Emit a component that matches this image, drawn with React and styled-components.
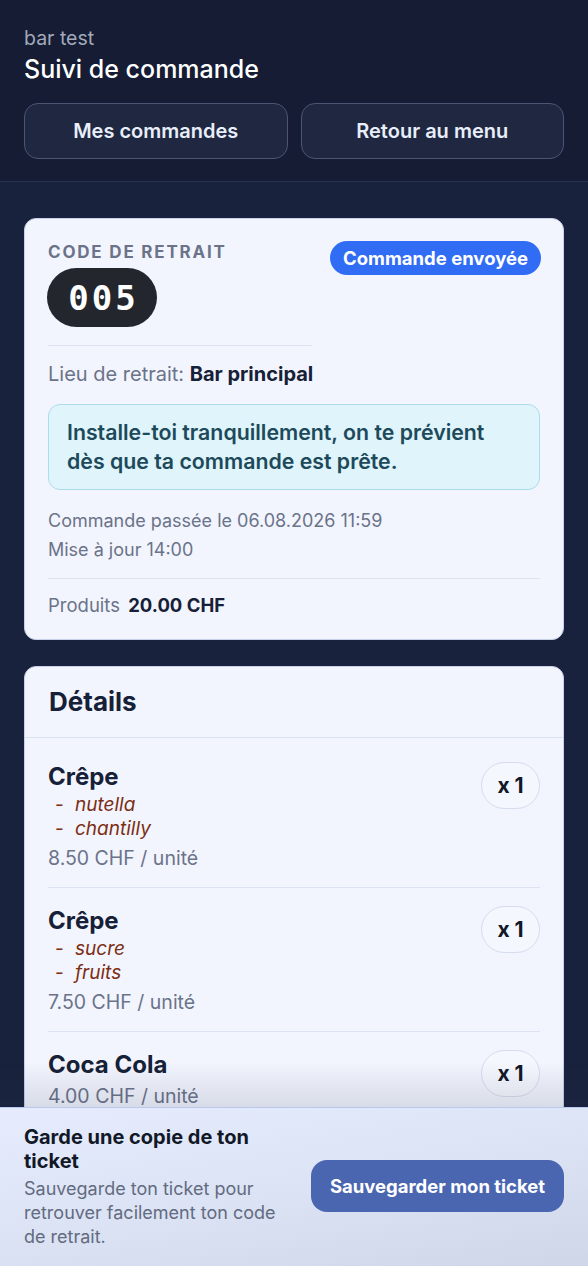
import React from 'react'
import styled, { createGlobalStyle } from 'styled-components'

const GlobalStyle = createGlobalStyle`
  * { box-sizing: border-box; }
  body {
    margin: 0;
    background: #19223c;
    font-family: Inter, "Noto Sans", sans-serif;
    -webkit-font-smoothing: antialiased;
  }
`

const Page = styled.div`
  min-height: 100vh;
  background: #19223c;
`

// top header
const Header = styled.header`
  background: #151c33;
  border-bottom: 1px solid #2a3450;
  padding: 26px 24px 22px;
`
const Venue = styled.div`
  font-size: 19.5px;
  line-height: 24px;
  color: #a2aabb;
`
const Title = styled.h1`
  margin: 4px 0 0;
  font-size: 25px;
  line-height: 30px;
  font-weight: 500;
  color: #ffffff;
`
const NavRow = styled.div`
  display: grid;
  grid-template-columns: 1fr 1fr;
  gap: 13px;
  margin-top: 19px;
`
const NavButton = styled.button`
  height: 56px;
  border-radius: 14px;
  border: 1px solid #4b5672;
  background: #1f2741;
  color: #e8eefa;
  font-family: inherit;
  font-size: 20px;
  font-weight: 600;
`

const Main = styled.main`
  padding: 36px 24px 180px;
  display: flex;
  flex-direction: column;
  gap: 26px;
`
const Card = styled.section`
  background: #f2f5fe;
  border: 1px solid #c7d0e8;
  border-radius: 12px;
  padding: ${p => (p.$flush ? '0' : '23px 23px 22px')};
`

// pickup card
const TopRow = styled.div`
  display: flex;
  justify-content: space-between;
  align-items: flex-start;
`
const CodeBlock = styled.div`
  width: 264px;
  padding-bottom: 18px;
  border-bottom: 1px solid #dde3f1;
`
const Label = styled.div`
  font-size: 17px;
  line-height: 20px;
  font-weight: 700;
  letter-spacing: 1.8px;
  text-transform: uppercase;
  color: #6b7389;
`
const CodePill = styled.div`
  display: flex;
  align-items: center;
  justify-content: center;
  margin-top: 6px;
  margin-left: -1px;
  height: 59px;
  width: 110px;
  border-radius: 30px;
  background: #23262c;
  color: #ffffff;
  font-family: "DejaVu Sans Mono", "Liberation Mono", monospace;
  font-size: 34px;
  font-weight: 700;
  letter-spacing: 3px;
  padding-left: 3px;
`
const StatusBadge = styled.span`
  display: inline-flex;
  align-items: center;
  height: 34px;
  padding: 0 13px;
  border-radius: 17px;
  background: #316cf4;
  color: #ffffff;
  font-size: 18.5px;
  font-weight: 700;
  margin: -1px -1px 0 0;
  white-space: nowrap;
`
const InfoLine = styled.div`
  margin-top: 16px;
  font-size: 20px;
  line-height: 24px;
  color: #6b7389;
  b { color: #162036; font-weight: 700; }
`
const Notice = styled.div`
  margin-top: 18px;
  padding: 13px 22px 13px 18px;
  background: #dff4fb;
  border: 1px solid #a9dcec;
  border-radius: 12px;
  font-size: 21.3px;
  line-height: 29px;
  font-weight: 600;
  color: #1d4a5a;
`
const Meta = styled.div`
  margin-top: 16px;
  font-size: 18px;
  line-height: 29px;
  color: #6b7389;
  padding-bottom: 14px;
  border-bottom: 1px solid #dde3f1;
`
const Total = styled.div`
  margin-top: 14px;
  font-size: 18.5px;
  line-height: 24px;
  color: #6b7389;
  b { color: #162036; font-weight: 700; margin-left: 3px; }
`

// details card
const DetailsHead = styled.h2`
  margin: 0;
  padding: 20px 24px;
  font-size: 26px;
  line-height: 30px;
  font-weight: 700;
  color: #162036;
  border-bottom: 1px solid #d8e0f1;
`
const ItemList = styled.div`
  padding: 6px 23px;
`
const Item = styled.div`
  display: flex;
  justify-content: space-between;
  align-items: flex-start;
  padding: 19px 0 17px;
  border-bottom: 1px solid #dbe2f2;
  &:last-child { border-bottom: none; }
`
const ItemName = styled.div`
  font-size: 24px;
  line-height: 27px;
  font-weight: 700;
  color: #162036;
`
const Options = styled.ul`
  list-style: none;
  margin: 3px 0 0;
  padding: 0 0 0 7px;
`
const Option = styled.li`
  font-size: 19px;
  line-height: 24px;
  font-style: italic;
  color: #7c2d12;
  &::before {
    content: '-';
    font-style: normal;
    display: inline-block;
    width: 20px;
  }
`
const UnitPrice = styled.div`
  margin-top: ${p => (p.$alone ? '6px' : '5px')};
  font-size: 19.5px;
  line-height: 24px;
  color: #6b7389;
`
const Qty = styled.div`
  flex-shrink: 0;
  display: flex;
  align-items: center;
  justify-content: center;
  width: 59px;
  height: 47px;
  margin-top: -1px;
  border-radius: 24px;
  border: 1px solid #d4dcef;
  background: #f5f7fe;
  font-size: 21px;
  font-weight: 700;
  color: #111827;
`

// sticky save bar
const SaveBar = styled.div`
  position: fixed;
  left: 0;
  right: 0;
  bottom: 0;
  height: 159px;
  display: flex;
  align-items: center;
  gap: 24px;
  padding: 0 24px;
  border-top: 1px solid #b9c8ee;
  background: linear-gradient(170deg, #e6ecfd 0%, #dbe3f5 50%, #ced6e8 100%);
  &::before {
    content: '';
    position: absolute;
    left: 0;
    right: 0;
    top: -46px;
    height: 45px;
    background: linear-gradient(to bottom, rgba(40, 50, 80, 0), rgba(40, 50, 80, 0.13));
    pointer-events: none;
  }
`
const SaveText = styled.div`
  flex: 1;
  min-width: 0;
`
const SaveTitle = styled.div`
  font-size: 20px;
  line-height: 24px;
  font-weight: 700;
  color: #111827;
`
const SaveHint = styled.div`
  margin-top: 4px;
  font-size: 18px;
  line-height: 24px;
  color: #636b7f;
`
const SaveButton = styled.button`
  flex-shrink: 0;
  width: 253px;
  height: 52px;
  border: none;
  border-radius: 16px;
  background: #4a66b0;
  color: #ffffff;
  font-family: inherit;
  font-size: 18.5px;
  font-weight: 700;
  margin-top: -2px;
`

const items = [
  { name: 'Crêpe', options: ['nutella', 'chantilly'], price: '8.50', qty: 1 },
  { name: 'Crêpe', options: ['sucre', 'fruits'], price: '7.50', qty: 1 },
  { name: 'Coca Cola', options: [], price: '4.00', qty: 1 },
]

export default function App() {
  return (
    <Page>
      <GlobalStyle />
      <Header>
        <Venue>bar test</Venue>
        <Title>Suivi de commande</Title>
        <NavRow>
          <NavButton>Mes commandes</NavButton>
          <NavButton>Retour au menu</NavButton>
        </NavRow>
      </Header>

      <Main>
        <Card>
          <TopRow>
            <CodeBlock>
              <Label>Code de retrait</Label>
              <CodePill>005</CodePill>
            </CodeBlock>
            <StatusBadge>Commande envoyée</StatusBadge>
          </TopRow>
          <InfoLine>
            Lieu de retrait: <b>Bar principal</b>
          </InfoLine>
          <Notice>Installe-toi tranquillement, on te prévient dès que ta commande est prête.</Notice>
          <Meta>
            <div>Commande passée le 06.08.2026 11:59</div>
            <div>Mise à jour 14:00</div>
          </Meta>
          <Total>
            Produits <b>20.00 CHF</b>
          </Total>
        </Card>

        <Card $flush>
          <DetailsHead>Détails</DetailsHead>
          <ItemList>
            {items.map((it, i) => (
              <Item key={i}>
                <div>
                  <ItemName>{it.name}</ItemName>
                  {it.options.length > 0 && (
                    <Options>
                      {it.options.map(o => (
                        <Option key={o}>{o}</Option>
                      ))}
                    </Options>
                  )}
                  <UnitPrice $alone={it.options.length === 0}>{it.price} CHF / unité</UnitPrice>
                </div>
                <Qty>x {it.qty}</Qty>
              </Item>
            ))}
          </ItemList>
        </Card>
      </Main>

      <SaveBar>
        <SaveText>
          <SaveTitle>Garde une copie de ton ticket</SaveTitle>
          <SaveHint>Sauvegarde ton ticket pour retrouver facilement ton code de retrait.</SaveHint>
        </SaveText>
        <SaveButton>Sauvegarder mon ticket</SaveButton>
      </SaveBar>
    </Page>
  )
}
